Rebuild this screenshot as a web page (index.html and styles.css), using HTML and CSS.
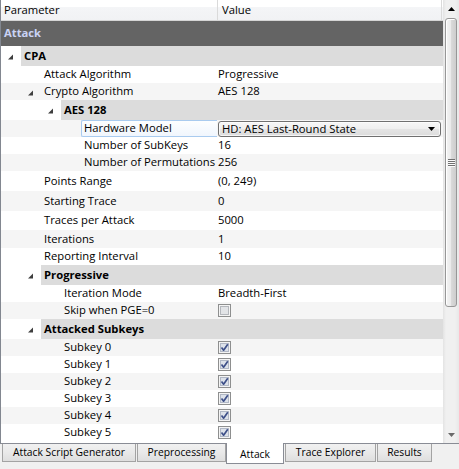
FILE: index.html
```html
<!DOCTYPE html>
<html lang="en">
<head>
<meta charset="utf-8">
<title>Attack Settings</title>
<link rel="stylesheet" href="styles.css">
</head>
<body>
<div class="app">
  <div class="frame">
    <div class="view">
      <div class="hdr">
        <div class="hc hname">Parameter</div>
        <div class="hc hval">Value</div>
      </div>

      <div class="row top h25"><span class="lbl">Attack</span></div>

      <div class="row group h20">
        <div class="name"><span class="ind i1"><svg class="tw" viewBox="0 0 20 6"><path d="M12 0.5V5.5H7Z"/></svg></span><span class="lbl">CPA</span></div>
      </div>
      <div class="row h17">
        <div class="name"><span class="ind i2"></span><span class="lbl">Attack Algorithm</span></div>
        <div class="val">Progressive</div>
      </div>
      <div class="row alt h17">
        <div class="name"><span class="ind i2"><svg class="tw" viewBox="0 0 20 6"><path d="M12 0.5V5.5H7Z"/></svg></span><span class="lbl">Crypto Algorithm</span></div>
        <div class="val">AES 128</div>
      </div>
      <div class="row group h20">
        <div class="name"><span class="ind i3"><svg class="tw" viewBox="0 0 20 6"><path d="M12 0.5V5.5H7Z"/></svg></span><span class="lbl">AES 128</span></div>
      </div>
      <div class="row alt h17">
        <div class="name"><span class="ind i4"></span><span class="lbl hl">Hardware Model</span></div>
        <div class="val combo-cell">
          <div class="combo"><span>HD: AES Last-Round State</span><svg class="drop" viewBox="0 0 7 4"><path d="M0 0H7L3.5 4Z"/></svg></div>
        </div>
      </div>
      <div class="row h17">
        <div class="name"><span class="ind i4"></span><span class="lbl">Number of SubKeys</span></div>
        <div class="val">16</div>
      </div>
      <div class="row alt h17">
        <div class="name"><span class="ind i4"></span><span class="lbl">Number of Permutations</span></div>
        <div class="val">256</div>
      </div>
      <div class="row h20">
        <div class="name"><span class="ind i2"></span><span class="lbl">Points Range</span></div>
        <div class="val">(0, 249)</div>
      </div>
      <div class="row alt h20">
        <div class="name"><span class="ind i2"></span><span class="lbl">Starting Trace</span></div>
        <div class="val">0</div>
      </div>
      <div class="row h19">
        <div class="name"><span class="ind i2"></span><span class="lbl">Traces per Attack</span></div>
        <div class="val">5000</div>
      </div>
      <div class="row alt h18">
        <div class="name"><span class="ind i2"></span><span class="lbl">Iterations</span></div>
        <div class="val">1</div>
      </div>
      <div class="row h17">
        <div class="name"><span class="ind i2"></span><span class="lbl">Reporting Interval</span></div>
        <div class="val">10</div>
      </div>
      <div class="row group h20">
        <div class="name"><span class="ind i2"><svg class="tw" viewBox="0 0 20 6"><path d="M12 0.5V5.5H7Z"/></svg></span><span class="lbl">Progressive</span></div>
      </div>
      <div class="row h17">
        <div class="name"><span class="ind i3"></span><span class="lbl">Iteration Mode</span></div>
        <div class="val">Breadth-First</div>
      </div>
      <div class="row alt h17">
        <div class="name"><span class="ind i3"></span><span class="lbl">Skip when PGE=0</span></div>
        <div class="val"><svg class="cb" viewBox="0 0 13 13"><rect class="cb-out" x="0.5" y="0.5" width="12" height="12"/><rect class="cb-in" x="2.5" y="2.5" width="8" height="8"/></svg></div>
      </div>
      <div class="row group h20">
        <div class="name"><span class="ind i2"><svg class="tw" viewBox="0 0 20 6"><path d="M12 0.5V5.5H7Z"/></svg></span><span class="lbl">Attacked Subkeys</span></div>
      </div>
      <div class="row alt h17">
        <div class="name"><span class="ind i3"></span><span class="lbl">Subkey 0</span></div>
        <div class="val"><svg class="cb on" viewBox="0 0 13 13"><rect class="cb-out" x="0.5" y="0.5" width="12" height="12"/><rect class="cb-in" x="2.5" y="2.5" width="8" height="8"/><path class="tick" d="M3.5 6.5L5.6 9.2L9.8 3.2"/></svg></div>
      </div>
      <div class="row h17">
        <div class="name"><span class="ind i3"></span><span class="lbl">Subkey 1</span></div>
        <div class="val"><svg class="cb on" viewBox="0 0 13 13"><rect class="cb-out" x="0.5" y="0.5" width="12" height="12"/><rect class="cb-in" x="2.5" y="2.5" width="8" height="8"/><path class="tick" d="M3.5 6.5L5.6 9.2L9.8 3.2"/></svg></div>
      </div>
      <div class="row alt h17">
        <div class="name"><span class="ind i3"></span><span class="lbl">Subkey 2</span></div>
        <div class="val"><svg class="cb on" viewBox="0 0 13 13"><rect class="cb-out" x="0.5" y="0.5" width="12" height="12"/><rect class="cb-in" x="2.5" y="2.5" width="8" height="8"/><path class="tick" d="M3.5 6.5L5.6 9.2L9.8 3.2"/></svg></div>
      </div>
      <div class="row h17">
        <div class="name"><span class="ind i3"></span><span class="lbl">Subkey 3</span></div>
        <div class="val"><svg class="cb on" viewBox="0 0 13 13"><rect class="cb-out" x="0.5" y="0.5" width="12" height="12"/><rect class="cb-in" x="2.5" y="2.5" width="8" height="8"/><path class="tick" d="M3.5 6.5L5.6 9.2L9.8 3.2"/></svg></div>
      </div>
      <div class="row alt h17">
        <div class="name"><span class="ind i3"></span><span class="lbl">Subkey 4</span></div>
        <div class="val"><svg class="cb on" viewBox="0 0 13 13"><rect class="cb-out" x="0.5" y="0.5" width="12" height="12"/><rect class="cb-in" x="2.5" y="2.5" width="8" height="8"/><path class="tick" d="M3.5 6.5L5.6 9.2L9.8 3.2"/></svg></div>
      </div>
      <div class="row h17">
        <div class="name"><span class="ind i3"></span><span class="lbl">Subkey 5</span></div>
        <div class="val"><svg class="cb on" viewBox="0 0 13 13"><rect class="cb-out" x="0.5" y="0.5" width="12" height="12"/><rect class="cb-in" x="2.5" y="2.5" width="8" height="8"/><path class="tick" d="M3.5 6.5L5.6 9.2L9.8 3.2"/></svg></div>
      </div>
    </div>

    <div class="sb">
      <div class="sbtn"><svg class="arr up" viewBox="0 0 7 4"><path d="M3.5 0L7 4H0Z"/></svg></div>
      <div class="thumb"><span class="grip"></span></div>
      <div class="track"></div>
      <div class="sbtn"><svg class="arr down" viewBox="0 0 7 4"><path d="M0 0H7L3.5 4Z"/></svg></div>
    </div>
  </div>

  <div class="tabs">
    <div class="tab t-gen">Attack Script Generator</div>
    <div class="tab t-pre">Preprocessing</div>
    <div class="tab t-atk sel">Attack</div>
    <div class="tab t-trace">Trace Explorer</div>
    <div class="tab t-res">Results</div>
  </div>
</div>
</body>
</html>
```
FILE: styles.css
```css
* { box-sizing: border-box; }

body {
  margin: 0;
  background: #f0f0f0;
  font-family: "Open Sans", "Noto Sans", sans-serif;
  font-size: 11.25px;
  line-height: 1.3;
  color: #000;
}

.app {
  width: 459px;
  height: 469px;
  display: flex;
  flex-direction: column;
  overflow: hidden;
}

/* tree frame: view + vertical scrollbar */
.frame {
  height: 444px;
  flex: none;
  display: flex;
  border-left: 1px solid #828790;
  border-bottom: 1px solid #898c95;
  background: #fff;
}

.view {
  width: 442px;
  flex: none;
  overflow: hidden;
  display: flex;
  flex-direction: column;
}

/* column header */
.hdr {
  height: 21px;
  flex: none;
  display: flex;
  border-bottom: 1px solid #d5d5d5;
  background: linear-gradient(#ffffff 0, #ffffff 35%, #f4f5f7 35%, #f1f2f4 100%);
}
.hc {
  display: flex;
  align-items: center;
  border-right: 1px solid #dadada;
}
.hname { width: 217px; padding-left: 3px; }
.hval { width: 224px; padding-left: 4px; }

/* rows */
.row { display: flex; flex: none; }
.h17 { height: 17px; }
.h18 { height: 18px; }
.h19 { height: 19px; }
.h20 { height: 20px; }
.h25 { height: 25px; }

.alt { background: #f5f5f5; }

.top {
  background: #646464;
  color: #cad3f5;
  align-items: center;
}
.top .lbl { font-weight: 700; }

.group { background: #dcdcdc; }
.group .ind { background: #fff; }
.group .lbl { font-weight: 700; }

.name {
  width: 216px;
  flex: none;
  display: flex;
  align-items: center;
}
.ind {
  align-self: stretch;
  flex: none;
  display: flex;
  align-items: center;
  justify-content: flex-end;
}
.i1 { width: 20px; }
.i2 { width: 40px; }
.i3 { width: 60px; }
.i4 { width: 80px; }

.tw {
  width: 20px;
  height: 6px;
  margin-top: 2px;
  fill: #3e3e3e;
}

.lbl {
  padding-left: 3px;
  white-space: nowrap;
}

/* hovered name cell */
.lbl.hl {
  align-self: stretch;
  flex: 1;
  display: flex;
  align-items: center;
  padding-left: 2px;
  border: 1px solid #a9cbef;
  border-right: 0;
  border-radius: 2px 0 0 2px;
  background: linear-gradient(#fdfeff, #f0f6fd);
}

.val {
  flex: 1;
  display: flex;
  align-items: center;
  padding-left: 1px;
  white-space: nowrap;
}

/* combo box editor */
.combo-cell { align-items: flex-start; padding-top: 1px; }
.combo {
  width: 223px;
  height: 16px;
  border: 1px solid #707070;
  border-radius: 3px;
  background: linear-gradient(#f7f7f7, #efefef 50%, #e5e5e5 50%, #dcdcdc);
  box-shadow: inset 0 0 0 1px rgba(255, 255, 255, 0.7);
  display: flex;
  align-items: center;
  justify-content: space-between;
  padding: 0 5px 0 3px;
}
.drop { width: 7px; height: 4px; fill: #000; }

/* check boxes */
.cb { width: 13px; height: 13px; display: block; }
.cb-out { fill: #f4f4f4; stroke: #8e8f8f; }
.cb-in { fill: #e2e4e7; stroke: #b4b7bc; }
.cb.on .cb-in { fill: #dde2ea; stroke: #b1b8c6; }
.tick {
  fill: none;
  stroke: #3e5089;
  stroke-width: 1.7;
  stroke-linejoin: round;
}

/* vertical scrollbar */
.sb {
  width: 16px;
  flex: none;
  display: flex;
  flex-direction: column;
  background: linear-gradient(to right, #e3e3e3, #f0f0f0 3px, #f0f0f0 12px, #e8e8e8);
}
.sbtn {
  height: 17px;
  flex: none;
  display: flex;
  align-items: center;
  justify-content: center;
}
.arr { width: 7px; height: 4px; }
.arr.up { fill: #000; }
.arr.down { fill: #6a6a6a; }

.thumb {
  height: 289px;
  flex: none;
  margin: 1px 2px 0 2px;
  border: 1px solid #979797;
  border-radius: 3px;
  background: linear-gradient(to right, #f4f4f4, #eaeaea 50%, #dadada 50%, #cdcdcd);
  box-shadow: inset 1px 1px 0 #ffffff;
  display: flex;
  align-items: center;
  justify-content: center;
}
.grip {
  width: 7px;
  height: 8px;
  background: repeating-linear-gradient(#707070 0, #707070 1px, #fafafa 1px, #fafafa 2px);
}
.track { flex: 1; }

/* bottom tab bar */
.tabs {
  flex: 1;
  display: flex;
  align-items: flex-start;
  padding-left: 2px;
  font-size: 10.3px;
}
.tab {
  height: 18px;
  padding-top: 1px;
  border: 1px solid #a3a3a3;
  border-top: 0;
  background: linear-gradient(#f1f1f1, #e9e9e9 50%, #dedede);
  display: flex;
  align-items: center;
  justify-content: center;
  white-space: nowrap;
}
.tab.sel {
  height: 21px;
  margin-top: -1px;
  padding-top: 3px;
  background: #fff;
  border-color: #898c95;
}
.t-gen { width: 134px; margin-right: 1px; }
.t-pre { width: 89px; }
.t-atk { width: 58px; margin-right: 1px; }
.t-trace { width: 91px; margin-right: 1px; }
.t-res { width: 55px; }
```
